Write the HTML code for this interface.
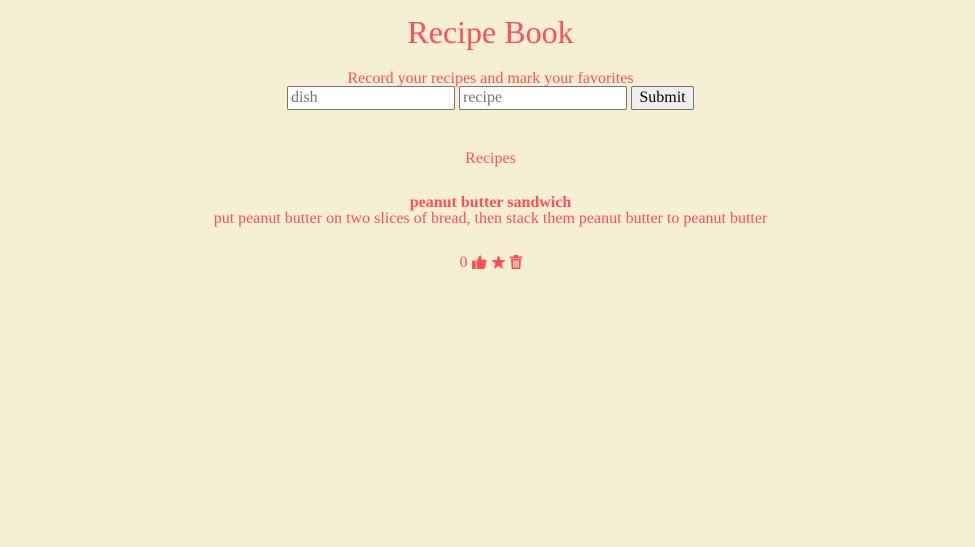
<!DOCTYPE html>
<html><head><meta charset="utf-8"><style>
html,body{margin:0;padding:0;width:975px;height:547px;background:#f5efd3;overflow:hidden}
body{font-family:"Liberation Serif",serif;color:#ff4f58;font-size:16px;position:relative}
.c{position:absolute;left:0;width:981px;text-align:center;line-height:18px;white-space:nowrap}
h1{position:absolute;left:0;width:981px;margin:0;text-align:center;font-weight:normal;font-size:32px;line-height:37px;top:14px}
input{position:absolute;top:86px;height:24px;box-sizing:border-box;width:168px;border:1px solid #767676;border-radius:2px;background:#fff;font-family:"Liberation Serif",serif;font-size:16px;padding:1px 3px;color:#000}
input::placeholder{color:#757575}
button{position:absolute;top:86px;left:631px;width:63px;height:24px;box-sizing:border-box;border:1px solid #767676;border-radius:2px;background:#efefef;font-family:"Liberation Serif",serif;font-size:16px;padding:0;color:#000}
svg{vertical-align:-2px}
</style></head><body>
<h1>Recipe Book</h1>
<div class="c" style="top:70px">Record your recipes and mark your favorites</div>
<input style="left:287px" placeholder="dish">
<input style="left:459px" placeholder="recipe">
<button>Submit</button>
<div class="c" style="top:150px">Recipes</div>
<div class="c" style="top:194px;font-weight:bold">peanut butter sandwich</div>
<div class="c" style="top:210px">put peanut butter on two slices of bread, then stack them peanut butter to peanut butter</div>
<div class="c" style="top:254px">0 <svg width="15" height="14" viewBox="0 0 16 15"><rect x="0" y="6" width="4" height="9" fill="#ff4f58"/><path d="M5 6 L8 1 Q9 0 10 1 L10 5 L15 5 Q16 6 15 8 L14 14 Q13 15 12 15 L5 15 Z" fill="#ff4f58"/></svg> <svg width="15" height="14" viewBox="0 0 24 23"><path d="M12 0 L15 8 L24 8.5 L17 14 L19.5 23 L12 18 L4.5 23 L7 14 L0 8.5 L9 8 Z" fill="#ff4f58"/></svg> <svg width="12" height="14" viewBox="0 0 12 14"><rect x="0" y="1.5" width="12" height="2" fill="#ff4f58"/><rect x="4" y="0" width="4" height="2" fill="#ff4f58"/><path d="M1 4 H11 L10.3 14 H1.7 Z" fill="#ff4f58"/><rect x="3.3" y="5.5" width="1.2" height="7" fill="#f5efd3"/><rect x="5.4" y="5.5" width="1.2" height="7" fill="#f5efd3"/><rect x="7.5" y="5.5" width="1.2" height="7" fill="#f5efd3"/></svg></div>
</body></html>
